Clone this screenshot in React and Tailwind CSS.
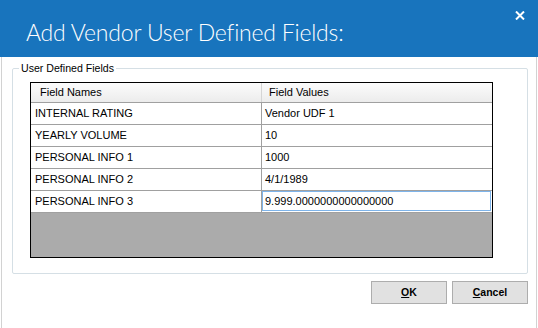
const rows = [
  ["INTERNAL RATING", "Vendor UDF 1"],
  ["YEARLY VOLUME", "10"],
  ["PERSONAL INFO 1", "1000"],
  ["PERSONAL INFO 2", "4/1/1989"],
];

function CloseIcon() {
  return (
    <svg width="10" height="9" viewBox="0 0 10 9" className="block">
      <path d="M1 0.5 L9 8.5 M9 0.5 L1 8.5" stroke="#fff" strokeWidth="2" />
    </svg>
  );
}

export default function App() {
  return (
    <div className="w-[538px] h-[328px] bg-white overflow-hidden font-['Liberation_Sans',Arial,sans-serif] text-[11px] text-black">
      <div className="h-[57px] bg-[#1874bd] flex justify-between">
        <h1 className="pl-[26px] pt-[20px] text-[23px] leading-[24px] font-light tracking-[-0.2px] text-white font-['Lato',sans-serif]">
          Add Vendor User Defined Fields:
        </h1>
        <div className="pt-[11px] pr-[13px]">
          <CloseIcon />
        </div>
      </div>

      <div className="mx-px border-x border-[#d2d2d2] h-[271px] pt-[5px]">
        <fieldset className="ml-[10px] mr-[8px] border border-[#d5dfe5] rounded-[2px] pl-[17px] pr-[34px] pt-[8px] pb-[15px]">
          <legend className="-ml-[11px] px-[2px] leading-[12px] text-[10.6px]">User Defined Fields</legend>

          <div className="border border-black flex flex-col h-[176px]">
            <div className="flex h-[20px] border-b border-[#a0a0a0] bg-gradient-to-b from-[#fcfcfc] to-[#ececec]">
              <div className="w-[231px] border-r border-[#d5d5d5] pl-[9px] flex items-center">Field Names</div>
              <div className="flex-1 pl-[7px] flex items-center">Field Values</div>
            </div>

            {rows.map(([name, value]) => (
              <div key={name} className="flex h-[22px] border-b border-[#a0a0a0] bg-white">
                <div className="w-[231px] border-r border-[#a0a0a0] pl-[4px] flex items-center">{name}</div>
                <div className="flex-1 pl-[3px] flex items-center">{value}</div>
              </div>
            ))}

            <div className="flex h-[22px] border-b border-[#a0a0a0] bg-white">
              <div className="w-[231px] border-r border-[#a0a0a0] pl-[4px] flex items-center">PERSONAL INFO 3</div>
              <div className="flex-1 pr-px pb-px">
                <div className="h-full border border-[#7eb4ea] pl-[2px] flex items-center">9.999.0000000000000000</div>
              </div>
            </div>

            <div className="flex-1 bg-[#ababab]" />
          </div>
        </fieldset>

        <div className="flex justify-end gap-[5px] mr-[8px] mt-[7px]">
          <button className="w-[76px] h-[23px] bg-[#e1e1e1] border border-[#adadad] font-bold text-[10.5px]">
            <span className="underline">O</span>K
          </button>
          <button className="w-[76px] h-[23px] bg-[#e1e1e1] border border-[#adadad] font-bold text-[10.5px]">
            <span className="underline">C</span>ancel
          </button>
        </div>
      </div>
    </div>
  );
}
